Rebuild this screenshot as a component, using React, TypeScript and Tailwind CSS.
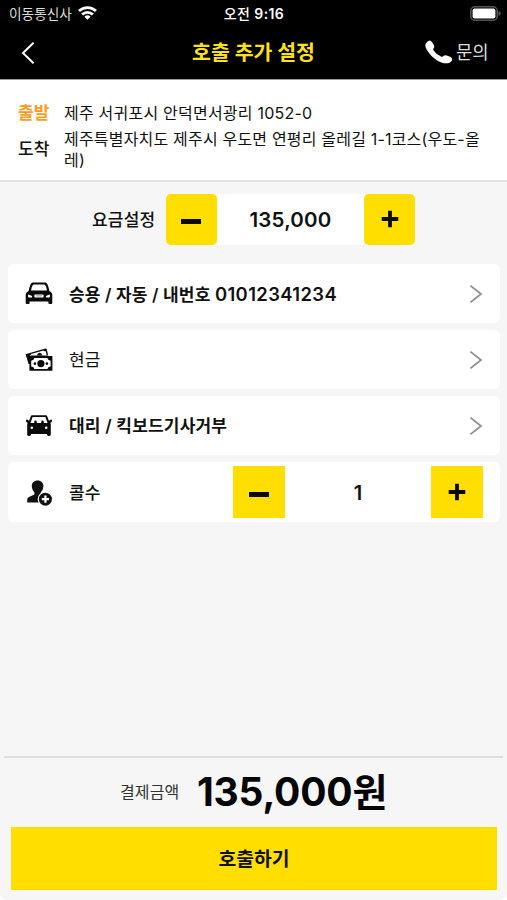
import type { ReactNode } from "react";

const FONT = "font-['Inter','Noto_Sans_CJK_KR',sans-serif]";

function Chevron() {
  return (
    <svg className="h-[20px] w-[14px]" viewBox="0 0 14 20" fill="none" stroke="#8e8e8e" strokeWidth="1.8">
      <path d="M1.4 1.6 L12 10 L1.4 18.4" />
    </svg>
  );
}

function CarIcon() {
  return (
    <svg className="mt-[1px] h-[24px] w-[28px]" viewBox="0 0 28 24">
      <path
        fillRule="evenodd"
        fill="#0a0a0a"
        d="M6.1 1.4 Q6.8 .6 8 .6 H20 Q21.2 .6 21.9 1.4 Q23.2 3 24.4 9 L26.4 10.6 Q27.3 11.4 27.3 13 V21 Q27.3 22 26.3 22 H24.4 Q23.4 22 23.4 21 V19.4 H4.6 V21 Q4.6 22 3.6 22 H1.7 Q.7 22 .7 21 V13 Q.7 11.4 1.6 10.6 L3.6 9 Q4.8 3 6.1 1.4 Z M7.8 3 Q6.8 4.2 6 8.6 H22 Q21.2 4.2 20.2 3 Q19.8 2.4 19 2.4 H9 Q8.2 2.4 7.8 3 Z M3.2 12.4 Q2.6 15.4 4 15.4 H7 Q8.2 13.6 3.2 12.4 Z M24.8 12.4 Q25.4 15.4 24 15.4 H21 Q19.8 13.6 24.8 12.4 Z M10 12.4 Q9.4 12.4 9.4 13 V14.8 Q9.4 15.4 10 15.4 H18 Q18.6 15.4 18.6 14.8 V13 Q18.6 12.4 18 12.4 Z"
      />
      <path d="M11 13.9 H17" stroke="#777" strokeWidth=".8" />
    </svg>
  );
}

function CashIcon() {
  return (
    <svg className="h-[24px] w-[28px]" viewBox="0 0 28 24">
      <path d="M.6 6.2 L20.4 .6 Q21.5 .4 21.8 1.5 L23.2 7.6 H5.2 V16 H3.6 Z" fill="#0a0a0a" />
      <path d="M4.6 8 Q6 7.2 6 5.9 L18.4 2.4 Q19.4 3.5 20.8 3.2 L21.6 7 H5 Z" fill="#fff" />
      <path d="M12 7.4 Q12.4 4.8 14.6 4.8 Q16.8 4.8 17.3 7.4 Z" fill="#0a0a0a" />
      <rect x="4.4" y="7.9" width="23" height="14.9" rx=".6" fill="#0a0a0a" />
      <path d="M9.4 10.1 H22.4 Q22.7 12.4 25.6 12.8 V18.4 Q22.7 18.8 22.4 21.1 H9.4 Q9.1 18.8 6.2 18.4 V12.8 Q9.1 12.4 9.4 10.1 Z" fill="#fff" />
      <circle cx="15.9" cy="15.6" r="3.6" fill="#0a0a0a" />
      <circle cx="9.9" cy="15.6" r="1.3" fill="#0a0a0a" />
      <circle cx="21.9" cy="15.6" r="1.3" fill="#0a0a0a" />
    </svg>
  );
}

function TaxiIcon() {
  return (
    <svg className="mt-[1px] h-[24px] w-[28px]" viewBox="0 0 28 24">
      <path
        fillRule="evenodd"
        fill="#0a0a0a"
        d="M7 1.2 H21 Q21.8 1.2 22.1 2 L24.1 7.2 Q24.3 6 25.3 5.8 L27 5.8 Q27.6 8.2 25.4 8.8 L25.8 10.4 V20.6 Q25.8 22 24.4 22 H23.4 Q22 22 22 20.6 V20 H6 V20.6 Q6 22 4.6 22 H3.6 Q2.2 22 2.2 20.6 V10.4 L2.6 8.8 Q.4 8.2 1 5.8 L2.7 5.8 Q3.7 6 3.9 7.2 L5.9 2 Q6.2 1.2 7 1.2 Z M7.6 3 L5.4 9 H9.2 V8 Q9.2 6.6 10.5 6.6 Q11.8 6.6 11.8 8 V9 H16.2 V8 Q16.2 6.6 17.5 6.6 Q18.8 6.6 18.8 8 V9 H22.6 L20.4 3 Z M6.8 12.5 A1.3 1.3 0 1 0 6.8 15.1 A1.3 1.3 0 1 0 6.8 12.5 Z M21.2 12.5 A1.3 1.3 0 1 0 21.2 15.1 A1.3 1.3 0 1 0 21.2 12.5 Z"
      />
    </svg>
  );
}

function PersonAddIcon() {
  return (
    <svg className="mt-[1px] h-[26px] w-[28px]" viewBox="0 0 28 26">
      <path d="M12.6 .4 C16.4 .4 18.5 3 18.4 6.2 C18.3 9.4 16.9 10.8 15.8 12.2 V14.4 L19 16.4 V22.4 H2.2 V19.6 Q2.2 17.8 4 17 L9.4 14.4 V12.2 C8.3 10.8 6.9 9.4 6.8 6.2 C6.7 3 8.8 .4 12.6 .4 Z" fill="#111" />
      <circle cx="20.4" cy="19.2" r="7.7" fill="#fff" />
      <circle cx="20.4" cy="19.2" r="6.5" fill="#111" />
      <path d="M20.4 15.6 V22.8 M16.8 19.2 H24" stroke="#fff" strokeWidth="2.2" />
    </svg>
  );
}

function Minus() {
  return <span className="mt-[4px] mr-[1px] block h-[5px] w-[20px] bg-[#0a0a0a]" />;
}

function Plus() {
  return (
    <svg className="mb-[1px] h-[18px] w-[18px]" viewBox="0 0 18 18" stroke="#0a0a0a" strokeWidth="3.8">
      <path d="M9 .7 V17.3 M.7 9 H17.3" />
    </svg>
  );
}

function StepButton({ label, rounded, children }: { label: string; rounded?: boolean; children: ReactNode }) {
  return (
    <button
      aria-label={label}
      className={`flex items-center justify-center bg-[#ffde00] ${rounded ? "h-[51px] w-[51px] rounded-[5px]" : "h-[52px] w-[52px]"}`}
    >
      {children}
    </button>
  );
}

function Row({ icon, label, children }: { icon: ReactNode; label: ReactNode; children: ReactNode }) {
  return (
    <div className="flex h-[59px] items-center rounded-[6px] bg-white pl-[17px] last:h-[60px]">
      <div className="flex w-[28px] justify-center">{icon}</div>
      <div className="ml-[16px] flex-1 pt-[3px] whitespace-nowrap">{label}</div>
      {children}
    </div>
  );
}

export default function App() {
  return (
    <div className="bg-white">
      <div className={`flex h-[900px] w-[507px] flex-col overflow-hidden rounded-b-[7px] bg-[#f6f6f6] text-[#111] ${FONT}`}>
        <header className="h-[80px] shrink-0 border-b border-[#999] bg-black text-white">
          <div className="grid h-[26px] grid-cols-3 items-center pr-[6px] pl-[9px] text-[14px] leading-[20px]">
            <div className="flex items-center gap-[5px] text-[13.7px] text-[#ddd]">
              <span className="w-[64px] pt-[1px] whitespace-nowrap">이동통신사</span>
              <svg className="h-[14px] w-[19px]" viewBox="0 0 19 14" fill="none" stroke="#fff" strokeWidth="2.8">
                <path d="M1 5.1 A12.2 12.2 0 0 1 18 5.1" />
                <path d="M4.1 8.5 A7.8 7.8 0 0 1 14.9 8.5" />
                <path d="M6.4 10.7 A4.6 4.6 0 0 1 12.6 10.7 L9.5 13.8 Z" fill="#fff" stroke="none" />
              </svg>
            </div>
            <div className="pt-[2px] pr-[2px] text-center font-semibold tracking-[0.4px] whitespace-nowrap">
              <span className="font-medium">오전</span> 9:16
            </div>
            <div className="flex justify-end">
              <svg className="h-[15px] w-[31px]" viewBox="0 0 31 15">
                <rect x=".8" y=".8" width="26.4" height="13.4" rx="4" fill="none" stroke="#555" strokeWidth="1.5" />
                <rect x="2.6" y="2.6" width="22.8" height="9.8" rx="2" fill="#fff" />
                <path d="M28.5 5 Q30.8 5.8 30.8 7.5 Q30.8 9.2 28.5 10 Z" fill="#555" />
              </svg>
            </div>
          </div>
          <div className="grid h-[53px] grid-cols-[100px_1fr_100px] items-center">
            <svg className="ml-[21px] h-[24px] w-[14px]" viewBox="0 0 14 24" fill="none" stroke="#fff" strokeWidth="2">
              <path d="M12.6 1.8 L2 12 L12.6 22.2" />
            </svg>
            <h1 className="text-center text-[20.5px] leading-[28px] font-bold whitespace-nowrap text-[#ffe11a]">호출 추가 설정</h1>
            <div className="flex items-center gap-[3px] pl-[18px]">
              <svg className="mb-[1px] h-[24px] w-[28px] shrink-0" viewBox="0 0 28 24" fill="#fff">
                <path d="M.8 3.4 Q2.4 .9 4.6 .5 Q6.3 .4 8.6 4.4 Q10 7 8.6 8.2 Q7.8 9.2 8.6 10.4 Q11.6 14.6 16 16.6 Q17.2 17.2 18.2 16.3 Q19.6 15 21.6 15.5 Q26.6 17 27.2 18.8 Q27.6 20.8 25 22.4 Q22 24 17.8 22.9 Q12 21.2 7 16.4 Q1.8 11.2 .5 6.8 Q0 4.8 .8 3.4 Z" />
              </svg>
              <span className="pt-[1px] text-[17.8px] leading-[24px] whitespace-nowrap text-[#ddd]">문의</span>
            </div>
          </div>
        </header>

        <section className="grid h-[102px] shrink-0 grid-cols-[46px_1fr] content-start border-b-2 border-[#e3e3e3] bg-white pt-[21px] pl-[18px] text-[16px]">
          <div className="text-[17px] leading-[24px] font-bold text-[#ff9d22]">출발</div>
          <div className="leading-[24px] tracking-[0.22px] whitespace-nowrap">제주 서귀포시 안덕면서광리 1052-0</div>
          <div className="mt-[14px] text-[17px] leading-[20px] font-medium">도착</div>
          <div className="mt-[4px] leading-[21px] tracking-[0.19px] whitespace-nowrap">
            제주특별자치도 제주시 우도면 연평리 올레길 1-1코스(우도-올
            <br />
            레)
          </div>
        </section>

        <section className="mt-[12px] flex h-[51px] shrink-0 items-center pl-[92px]">
          <span className="w-[74px] pt-[2px] text-[17px] font-medium tracking-[0.2px] whitespace-nowrap">요금설정</span>
          <StepButton label="요금 내리기" rounded><Minus /></StepButton>
          <span className="flex h-[51px] w-[147px] items-center justify-center bg-white pt-[2px] text-[20.5px] font-semibold tracking-[0.2px]">135,000</span>
          <StepButton label="요금 올리기" rounded><Plus /></StepButton>
        </section>

        <section className="mr-[7px] ml-[8px] mt-[19px] flex shrink-0 flex-col gap-[7px]">
          <Row
            icon={<CarIcon />}
            label={
              <span className="text-[17px] font-semibold">
                <span className="tracking-[0.15px]">승용 / 자동 / 내번호 </span>
                <span className="text-[18.4px] tracking-[0.4px]">01012341234</span>
              </span>
            }
          >
            <div className="mr-[17px]"><Chevron /></div>
          </Row>
          <Row icon={<CashIcon />} label={<span className="text-[17px]">현금</span>}>
            <div className="mr-[17px]"><Chevron /></div>
          </Row>
          <Row icon={<TaxiIcon />} label={<span className="text-[17px] font-semibold tracking-[0.2px]">대리 / 킥보드기사거부</span>}>
            <div className="mr-[17px]"><Chevron /></div>
          </Row>
          <Row icon={<PersonAddIcon />} label={<span className="text-[17px] font-medium">콜수</span>}>
            <div className="mr-[17px] flex items-center">
              <StepButton label="콜수 줄이기"><Minus /></StepButton>
              <span className="w-[146px] pt-[1px] text-center text-[20px] font-semibold">1</span>
              <StepButton label="콜수 늘리기"><Plus /></StepButton>
            </div>
          </Row>
        </section>

        <footer className="mt-auto flex h-[144px] shrink-0 flex-col">
          <div className="mx-[4px] h-[2px] shrink-0 bg-[#dedede]" />
          <div className="flex h-[69px] items-center pl-[120px]">
            <span className="w-[77px] pb-[2px] text-[16px] tracking-[0.1px] whitespace-nowrap text-[#333]">결제금액</span>
            <span className="pb-[2px] text-[39px] leading-[48px] font-bold tracking-[-0.2px] whitespace-nowrap text-[#050505]">
              135,000<span className="text-[38px]">원</span>
            </span>
          </div>
          <button className="mr-[10px] ml-[11px] h-[63px] bg-[#ffde00] pt-[2px] text-[19.3px] font-semibold">호출하기</button>
        </footer>
      </div>
    </div>
  );
}
